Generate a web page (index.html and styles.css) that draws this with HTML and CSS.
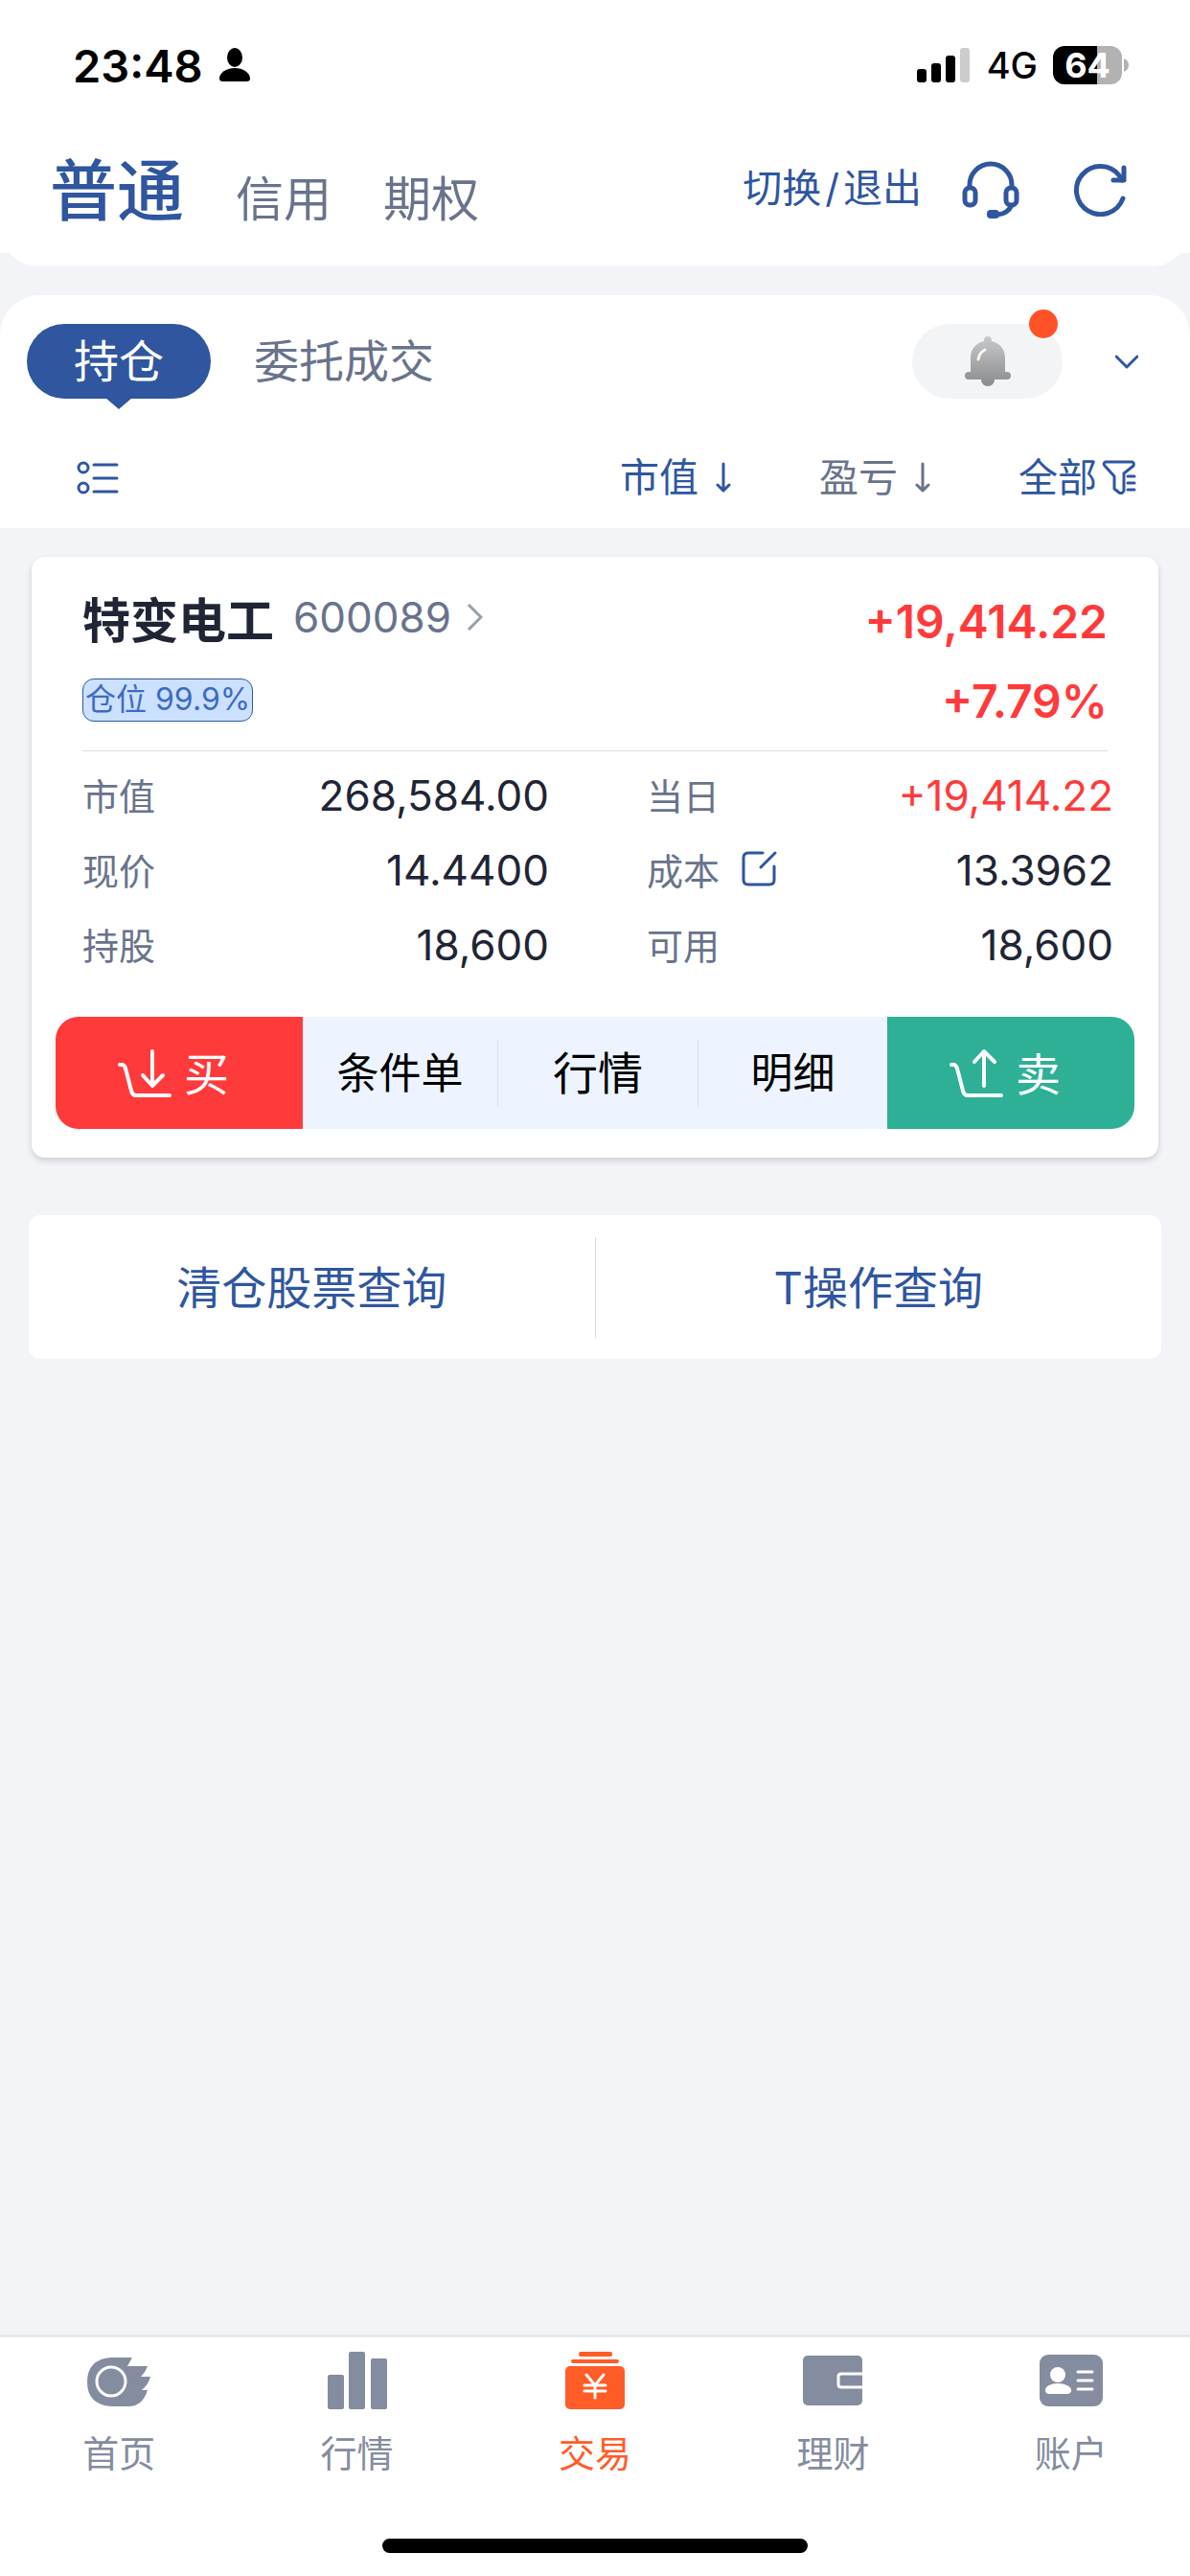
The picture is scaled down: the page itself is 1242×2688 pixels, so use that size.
FILE: index.html
```html
<!DOCTYPE html>
<html lang="zh-CN">
<head>
    <meta charset="UTF-8">
    <meta name="viewport" content="width=device-width, initial-scale=1.0">
    <title>交易 - 持仓</title>
    <link rel="stylesheet" href="styles.css">
</head>
<body>
    <header class="top">
        <div class="status">
            <span class="time">23:48</span>
            <svg class="person" width="32" height="36" viewBox="0 0 32 36"><ellipse cx="16" cy="10" rx="8" ry="10"/><path d="M4 35C1 35 0 34 0 32C0 26 7 21 16 21S32 26 32 32C32 34 31 35 28 35Z"/></svg>
            <svg class="signal" width="55" height="36" viewBox="0 0 55 36"><rect y="22" width="10" height="14" rx="3"/><rect x="15" y="16" width="10" height="20" rx="3"/><rect x="30" y="8" width="10" height="28" rx="3"/><rect x="45" width="10" height="36" rx="3" fill="#ccc"/></svg>
            <span class="network">4G</span>
            <div class="battery"><span>64</span></div>
            <svg class="battery-cap" width="5" height="14" viewBox="0 0 5 14"><path d="M0 0Q5 2 5 7T0 14Z"/></svg>
        </div>
        <nav class="account-nav">
            <button class="account active">普通</button>
            <button class="account">信用</button>
            <button class="account">期权</button>
            <a href="#" class="switch">切换<span>/</span>退出</a>
            <button class="icon-button service" aria-label="客服">
                <svg width="60" height="60" viewBox="0 0 60 60" fill="none" stroke="currentColor" stroke-width="5"><path d="M8 28V25A22 22 0 0 1 52 25V28"/><rect x="3" y="28" width="11" height="18" rx="5"/><rect x="46" y="28" width="11" height="18" rx="5"/><path d="M52 46Q48 55 37 56"/><rect x="26" y="51" width="13" height="9" rx="4" fill="currentColor" stroke="none"/></svg>
            </button>
            <button class="icon-button" aria-label="刷新">
                <svg width="56" height="56" viewBox="0 0 56 56" fill="none" stroke="currentColor" stroke-width="5" stroke-linecap="round"><path d="M52 37A25 25 0 1 1 48 13L51 18"/><path d="M53 5V18H42" stroke-linejoin="round"/></svg>
            </button>
        </nav>
    </header>

    <section class="panel">
        <div class="tabs">
            <button class="tab active">持仓</button>
            <button class="tab">委托成交</button>
            <button class="bell" aria-label="提醒">
                <svg width="48" height="52" viewBox="0 0 48 52">
                    <defs><linearGradient id="metal" x1="0" y1="0" x2="0" y2="1"><stop offset="0" stop-color="#c6c9cc"/><stop offset="1" stop-color="#8b8b8c"/></linearGradient></defs>
                    <path fill="url(#metal)" d="M20 5V4A4 4 0 0 1 28 4V5C37 7 42 14 42 22V37H44A4 4 0 0 1 44 45H31C31 49 28 52 24 52S17 49 17 45H4A4 4 0 0 1 4 37H6V22C6 14 11 7 20 5Z"/>
                    <path d="M14 24Q15 17 21 14" fill="none" stroke="#fff7ec" stroke-width="3" stroke-linecap="round"/>
                </svg>
            </button>
            <button class="icon-button expand" aria-label="展开">
                <svg width="24" height="15" viewBox="0 0 24 15" fill="none" stroke="currentColor" stroke-width="3" stroke-linecap="round" stroke-linejoin="round"><path d="M1 2L12 13L23 2"/></svg>
            </button>
        </div>
        <div class="filters">
            <button class="icon-button list" aria-label="列表">
                <svg width="44" height="36" viewBox="0 0 44 36" fill="none" stroke="currentColor" stroke-width="3" stroke-linecap="round"><circle cx="7" cy="8" r="5"/><circle cx="7" cy="29" r="5"/><path d="M18 5H42M18 19H42M18 33H42"/></svg>
            </button>
            <button class="filter on">市值
                <svg width="16" height="32" viewBox="0 0 16 32"><path d="M8 2V30M2 24L8 30L14 24"/></svg>
            </button>
            <button class="filter">盈亏
                <svg width="16" height="32" viewBox="0 0 16 32"><path d="M8 2V30M2 24L8 30L14 24"/></svg>
            </button>
            <button class="filter on all">全部
                <svg width="36" height="36" viewBox="0 0 36 36"><path d="M4 2H32Q34 3 33 6L23 14V32Q21 36 18 34L13 30V17L3 6Q1 3 4 2ZM27 17H34M27 24H34M27 31H34"/></svg>
            </button>
        </div>
    </section>

    <main>
        <section class="card">
            <div class="card-head">
                <div>
                    <a href="#" class="stock"><strong>特变电工</strong><span>600089</span>
                        <svg width="17" height="30" viewBox="0 0 17 30"><path d="M2 2L15 15L2 28"/></svg>
                    </a>
                    <span class="badge">仓位 99.9%</span>
                </div>
                <div class="profit">
                    <span>+19,414.22</span>
                    <span>+7.79%</span>
                </div>
            </div>
            <dl class="details">
                <div><dt>市值</dt><dd>268,584.00</dd></div>
                <div><dt>当日</dt><dd class="up">+19,414.22</dd></div>
                <div><dt>现价</dt><dd>14.4400</dd></div>
                <div>
                    <dt>成本
                        <button class="icon-button" aria-label="修改成本">
                            <svg width="38" height="38" viewBox="0 0 38 38" fill="none" stroke="currentColor" stroke-width="3" stroke-linecap="round"><path d="M23 3H8Q3 3 3 8V31Q3 36 8 36H30Q35 36 35 31V17M21 18L36 3"/></svg>
                        </button>
                    </dt>
                    <dd>13.3962</dd>
                </div>
                <div><dt>持股</dt><dd>18,600</dd></div>
                <div><dt>可用</dt><dd>18,600</dd></div>
            </dl>
            <div class="actions">
                <button class="trade buy">
                    <svg width="56" height="50" viewBox="0 0 56 50"><path d="M2 16H4Q7 16 8 20L14 43Q15 48 19 48H54M36 2V37M26 27L36 38L47 27"/></svg>
                    <span>买</span>
                </button>
                <button class="action">条件单</button>
                <button class="action large">行情</button>
                <button class="action">明细</button>
                <button class="trade sell">
                    <svg width="56" height="50" viewBox="0 0 56 50"><path d="M2 16H4Q7 16 8 20L14 43Q15 48 19 48H54M36 38V3M26 13L36 2L47 13"/></svg>
                    <span>卖</span>
                </button>
            </div>
        </section>
        <div class="queries">
            <a href="#">清仓股票查询</a>
            <a href="#">T操作查询</a>
        </div>
    </main>

    <footer>
        <nav class="tabbar">
            <a href="#">
                <svg width="68" height="60" viewBox="0 0 68 60"><path d="M26 6H48L43 15H64Q62 21 57 26H67Q65 34 58 40H64Q59 57 44 57H26Q1 55 1 31.500T26 6Z"/><ellipse cx="26" cy="31" rx="15" ry="15" fill="none" stroke="#fff" stroke-width="3"/></svg>
                首页
            </a>
            <a href="#">
                <svg width="62" height="60" viewBox="0 0 62 60"><rect y="24" width="17" height="36" rx="2"/><rect x="22" width="17" height="60" rx="2"/><rect x="45" y="7" width="17" height="53" rx="2"/></svg>
                行情
            </a>
            <a href="#" class="current">
                <svg width="62" height="60" viewBox="0 0 62 60"><rect x="14" width="35" height="5" rx="2"/><rect x="6" y="8" width="50" height="4" rx="2"/><rect y="15" width="62" height="45" rx="5"/><path d="M22 24L31 35L40 24M31 35V48M20 35H42M20 41H42" fill="none" stroke="#fff" stroke-width="3" stroke-linecap="round"/></svg>
                交易
            </a>
            <a href="#">
                <svg width="62" height="60" viewBox="0 0 62 60"><rect y="4" width="62" height="52" rx="5"/><path d="M62 23H40Q37 23 37 26V34Q37 37 40 37H62" fill="none" stroke="#fff" stroke-width="3"/></svg>
                理财
            </a>
            <a href="#">
                <svg width="66" height="60" viewBox="0 0 66 60"><rect y="3" width="66" height="54" rx="9"/><ellipse cx="19" cy="24" rx="8" ry="8" fill="#fff"/><path d="M10 44Q6 44 6 40C6 36 12 33 19 33S33 36 33 40Q33 44 29 44Z" fill="#fff"/><path d="M40 21H55M40 30H55M40 39H55" stroke="#fff" stroke-width="3" stroke-linecap="round"/></svg>
                账户
            </a>
        </nav>
        <div class="home-indicator"></div>
    </footer>
</body>
</html>
```
FILE: styles.css
```css
* {
    box-sizing: border-box;
}
body {
    font-family: Inter, "Noto Sans CJK SC", sans-serif;
    margin: 0;
    min-height: 100vh;
    display: flex;
    flex-direction: column;
    background: #f3f4f7;
    color: #1f2535;
}
button {
    font: inherit;
    color: inherit;
    background: none;
    border: none;
    margin: 0;
    padding: 0;
    cursor: pointer;
}
a {
    color: inherit;
    text-decoration: none;
}
svg {
    display: block;
    flex: none;
}
.icon-button {
    color: #2f569f;
}

/* status bar and account switch */
.top {
    background: linear-gradient(#fff, #fff) no-repeat;
    background-size: 100% calc(100% - 14px);
}
.status {
    display: flex;
    align-items: center;
    height: 136px;
    padding: 0 64px 0 76px;
    color: #000;
}
.time {
    font-size: 47px;
    font-weight: 600;
}
.person {
    margin-left: 17px;
}
.signal {
    margin-left: auto;
}
.network {
    margin: 0 16px 0 18px;
    font-size: 38px;
    font-weight: 500;
}
.battery {
    width: 72px;
    height: 40px;
    border-radius: 12px;
    background: linear-gradient(90deg, #000 64%, #b2b2b2 64%);
    color: #fff;
    font-size: 36px;
    font-weight: 700;
    line-height: 40px;
    text-align: center;
}
.battery-cap {
    margin-left: 2px;
    fill: #b2b2b2;
}
.account-nav {
    display: flex;
    align-items: center;
    height: 142px;
    padding: 0 66px 18px 52px;
    background: #fff;
    border-radius: 0 0 40px 40px;
}
.account {
    margin-right: 54px;
    padding-top: 20px;
    font-size: 50px;
    line-height: 72px;
    color: #69738c;
}
.account.active {
    padding-top: 4px;
    font-size: 70px;
    font-weight: 500;
    color: #2f569f;
}
.switch {
    margin-left: auto;
    font-size: 41px;
    line-height: 60px;
    padding-bottom: 4px;
    color: #2f569f;
}
.switch span {
    margin: 0 4px;
}
.service {
    margin: 0 56px 0 42px;
}

/* positions / orders tabs */
.panel {
    margin-top: 30px;
    background: #fff;
    border-radius: 42px 42px 0 0;
}
.tabs {
    display: flex;
    align-items: center;
    padding: 30px 54px 0 28px;
}
.tab {
    height: 78px;
    font-size: 47px;
    line-height: 78px;
    color: #69738c;
}
.tab.active {
    position: relative;
    width: 192px;
    margin-right: 45px;
    border-radius: 39px;
    background: #2f569f;
    color: #fff;
}
.tab.active::after {
    content: "";
    position: absolute;
    left: 82px;
    bottom: -11px;
    border: 14px solid transparent;
    border-top: 12px solid #2f569f;
    border-bottom: 0;
}
.bell {
    position: relative;
    display: flex;
    align-items: center;
    justify-content: center;
    width: 157px;
    height: 78px;
    margin-left: auto;
    border-radius: 39px;
    background: #f3f4f6;
}
.bell::after {
    content: "";
    position: absolute;
    top: -15px;
    right: 5px;
    width: 30px;
    height: 30px;
    border-radius: 50%;
    background: #ff5226;
}
.expand {
    margin-left: 55px;
}
.filters {
    display: flex;
    align-items: center;
    height: 135px;
    padding: 28px 56px 0 80px;
}
.list {
    margin-right: auto;
}
.filter {
    display: flex;
    align-items: center;
    gap: 18px;
    margin-left: 92px;
    font-size: 41px;
    line-height: 60px;
    color: #69738c;
}
.filter svg {
    fill: none;
    stroke: currentColor;
    stroke-width: 3px;
    stroke-linecap: round;
    stroke-linejoin: round;
}
.filter.on {
    color: #2f569f;
}
.filter.all {
    gap: 5px;
}

/* position card */
.card {
    margin: 30px 33px 60px;
    padding: 26px 25px 30px;
    border-radius: 14px;
    background: #fff;
    box-shadow: 0 3px 6px rgba(0, 0, 0, 0.16);
}
.card-head {
    display: flex;
    justify-content: space-between;
    height: 177px;
    margin: 0 28px;
    border-bottom: 1px solid #dcdde0;
}
.stock {
    display: flex;
    align-items: center;
    height: 74px;
    color: #69738c;
    font-size: 44px;
}
.stock strong {
    margin-right: 20px;
    font-size: 50px;
    color: #1f2535;
}
.stock svg {
    margin-left: 16px;
    fill: none;
    stroke: #979eae;
    stroke-width: 3px;
}
.badge {
    display: inline-block;
    height: 45px;
    margin-top: 27px;
    padding: 0 2px;
    border: 1px solid #2f569f;
    border-radius: 12px;
    background: #cce0ff;
    color: #3c6cbf;
    font-size: 32px;
    line-height: 42px;
}
.profit {
    display: flex;
    flex-direction: column;
    text-align: right;
    color: #ff3a3b;
    font-size: 48px;
    font-weight: 600;
    line-height: 83px;
}
.details {
    display: grid;
    grid-template-columns: 1fr 1fr;
    column-gap: 102px;
    margin: 7px 22px 36px 28px;
}
.details div {
    display: flex;
    align-items: center;
    justify-content: space-between;
    height: 78px;
}
.details dt {
    display: flex;
    align-items: center;
    gap: 22px;
    padding-bottom: 4px;
    font-size: 38px;
    color: #69738c;
}
.details dd {
    margin: 0;
    font-size: 44px;
}
.details .up {
    color: #ff3a3b;
}
.actions {
    display: grid;
    grid-template-columns: 258fr 203fr 210fr 197fr 258fr;
    align-items: center;
    height: 117px;
    border-radius: 24px;
    overflow: hidden;
    background: #edf4ff;
}
.trade {
    display: flex;
    align-items: center;
    justify-content: center;
    gap: 13px;
    height: 117px;
    padding-right: 12px;
    color: #fff;
    font-size: 47px;
}
.trade span {
    padding-bottom: 4px;
}
.trade svg {
    fill: none;
    stroke: currentColor;
    stroke-width: 4px;
    stroke-linecap: round;
    stroke-linejoin: round;
}
.buy {
    background: #ff3a3b;
}
.sell {
    background: #2db096;
}
.action {
    height: 70px;
    color: #000;
    font-size: 44px;
    line-height: 70px;
}
.action.large {
    font-size: 47px;
    border-left: 1px solid #d9dfe9;
    border-right: 1px solid #d9dfe9;
}

.queries {
    display: flex;
    align-items: center;
    height: 150px;
    margin: 0 30px;
    border-radius: 12px;
    background: #fff;
    color: #2f569f;
    font-size: 47px;
}
.queries a {
    flex: 1;
    line-height: 105px;
    text-align: center;
}
.queries a + a {
    border-left: 1px solid #d9dbe0;
}

/* bottom bar */
footer {
    margin-top: auto;
    padding-bottom: 24px;
    border-top: 3px solid #e8eaed;
    background: #fff;
}
.tabbar {
    display: flex;
    height: 210px;
    padding-top: 15px;
}
.tabbar a {
    flex: 1;
    display: flex;
    flex-direction: column;
    align-items: center;
    gap: 18px;
    color: #848c9f;
    font-size: 38px;
    line-height: 56px;
}
.tabbar svg {
    fill: currentColor;
}
.tabbar .current {
    color: #ff5c28;
}
.home-indicator {
    width: 444px;
    height: 15px;
    margin: 0 auto;
    border-radius: 8px;
    background: #000;
}
```
